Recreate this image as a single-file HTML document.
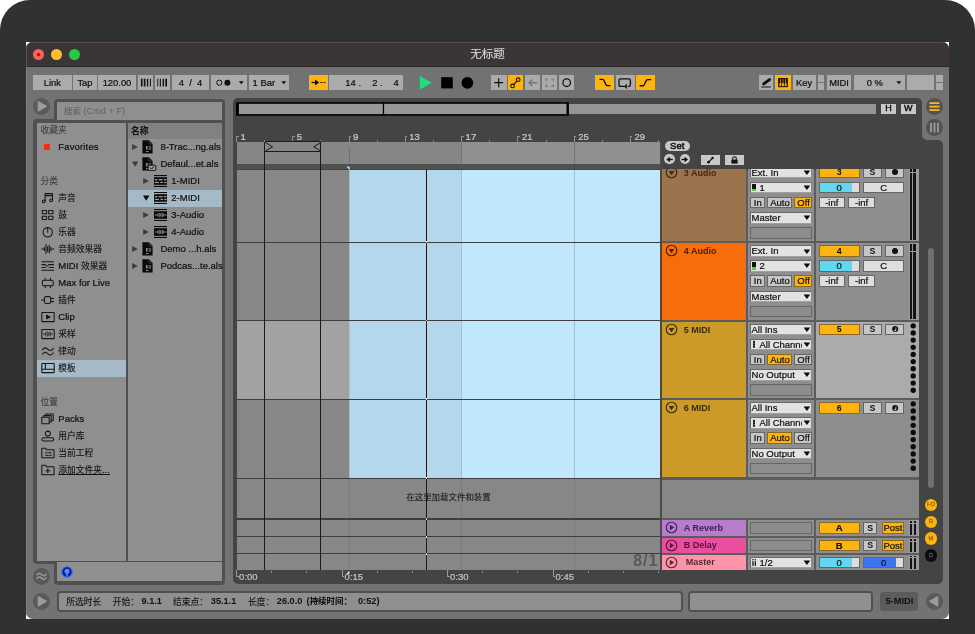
<!DOCTYPE html><html lang="zh"><head><meta charset="utf-8"><title>无标题</title><style>

html,body{margin:0;padding:0;}
body{width:975px;height:634px;overflow:hidden;background:#fff;position:relative;font-family:"Liberation Sans","Noto Sans CJK SC",sans-serif;font-size:9.5px;color:#111;}
div,svg{position:absolute;box-sizing:border-box;}
.k{font-size:0.92em;-webkit-text-stroke:0.1px currentColor;}
.t{white-space:nowrap;line-height:1;}
.c{text-align:center;}
.b{font-weight:bold;}
.btn{background:#ababab;}
.lbl{-webkit-text-stroke:0.22px currentColor;white-space:pre;display:flex;align-items:center;justify-content:center;line-height:1;}
.ll{white-space:nowrap;display:flex;align-items:center;justify-content:flex-start;line-height:1;}

</style></head><body>
<div style="left:0.00px;top:0.00px;width:975.00px;height:634.00px;background:#303133;border-radius:30px 30px 0 0;"></div>
<div style="left:26.00px;top:42.00px;width:923.00px;height:577.00px;background:#ffffff;"></div>
<div style="left:26px;top:42px;width:923px;height:577px;border-radius:6.5px 6.5px 7px 7px;overflow:hidden;background:#737373;will-change:transform;">
<div style="left:0.00px;top:0.00px;width:923.00px;height:26.00px;background:#3a3637;border-top:1px solid #555152;border-bottom:1px solid #393637;"></div>
<div style="left:0.00px;top:24.00px;width:923.00px;height:1.00px;background:#2a2728;"></div>
<div class="lbl" style="left:0.00px;top:5.60px;height:14px;font-size:12.6px;color:#dad8d8;width:923.00px;justify-content:center;-webkit-text-stroke:0;"><span><span class="k">无标题</span></span></div>
<div style="left:6.70px;top:6.70px;width:11.60px;height:11.60px;background:#fe5f57;border-radius:50%;"></div>
<div style="left:24.60px;top:6.70px;width:11.60px;height:11.60px;background:#febc2e;border-radius:50%;"></div>
<div style="left:42.60px;top:6.70px;width:11.60px;height:11.60px;background:#28c840;border-radius:50%;"></div>
<div style="left:10.90px;top:10.90px;width:3.20px;height:3.20px;background:#8a0a05;border-radius:50%;"></div>
<div style="left:0.00px;top:25.40px;width:923.00px;height:31.10px;background:#727272;"></div>
<div class="lbl" style="left:7.00px;top:33.00px;width:38.70px;height:15.20px;background:#ababab;font-size:9.4px;"><span>Link</span></div>
<div class="lbl" style="left:47.20px;top:33.00px;width:23.60px;height:15.20px;background:#ababab;font-size:9.4px;"><span>Tap</span></div>
<div class="lbl" style="left:72.30px;top:33.00px;width:37.40px;height:15.20px;background:#ababab;font-size:9.4px;"><span>120.00</span></div>
<div class="lbl" style="left:111.80px;top:33.00px;width:15.20px;height:15.20px;background:#ababab;font-size:9.4px;"><span></span></div>
<div class="lbl" style="left:129.00px;top:33.00px;width:14.80px;height:15.20px;background:#ababab;font-size:9.4px;"><span></span></div>
<div class="lbl" style="left:145.80px;top:33.00px;width:37.40px;height:15.20px;background:#ababab;font-size:9.4px;"><span>4&nbsp; /&nbsp; 4</span></div>
<div class="lbl" style="left:185.00px;top:33.00px;width:35.60px;height:15.20px;background:#ababab;font-size:9.4px;"><span></span></div>
<div class="lbl" style="left:223.00px;top:33.00px;width:40.00px;height:15.20px;background:#ababab;font-size:9.4px;"><span></span></div>
<div class="lbl" style="left:282.70px;top:33.00px;width:19.00px;height:15.20px;background:#feb40f;font-size:9.4px;"><span></span></div>
<div class="lbl" style="left:303.20px;top:33.00px;width:73.60px;height:15.20px;background:#ababab;font-size:9.4px;"><span></span></div>
<div class="lbl" style="left:304.00px;top:33.60px;height:14px;font-size:9.4px;color:#111;width:31.00px;justify-content:flex-end;"><span>14 .</span></div>
<div class="lbl" style="left:334.00px;top:33.60px;height:14px;font-size:9.4px;color:#111;width:22.70px;justify-content:flex-end;"><span>2 .</span></div>
<div class="lbl" style="left:354.00px;top:33.60px;height:14px;font-size:9.4px;color:#111;width:18.80px;justify-content:flex-end;"><span>4</span></div>
<div class="lbl" style="left:465.00px;top:33.00px;width:15.50px;height:15.20px;background:#ababab;font-size:9.4px;"><span></span></div>
<div class="lbl" style="left:482.00px;top:33.00px;width:15.40px;height:15.20px;background:#feb40f;font-size:9.4px;"><span></span></div>
<div class="lbl" style="left:499.20px;top:33.00px;width:15.10px;height:15.20px;background:#ababab;font-size:9.4px;"><span></span></div>
<div class="lbl" style="left:515.80px;top:33.00px;width:15.40px;height:15.20px;background:#ababab;font-size:9.4px;"><span></span></div>
<div class="lbl" style="left:532.80px;top:33.00px;width:15.40px;height:15.20px;background:#ababab;font-size:9.4px;"><span></span></div>
<div class="lbl" style="left:568.80px;top:33.00px;width:19.70px;height:15.20px;background:#feb40f;font-size:9.4px;"><span></span></div>
<div class="lbl" style="left:590.00px;top:33.00px;width:18.50px;height:15.20px;background:#ababab;font-size:9.4px;"><span></span></div>
<div class="lbl" style="left:610.00px;top:33.00px;width:19.00px;height:15.20px;background:#feb40f;font-size:9.4px;"><span></span></div>
<div class="lbl" style="left:733.00px;top:33.00px;width:14.30px;height:15.20px;background:#ababab;font-size:9.4px;"><span></span></div>
<div class="lbl" style="left:749.00px;top:33.00px;width:16.00px;height:15.20px;background:#feb40f;font-size:9.4px;"><span></span></div>
<div class="lbl" style="left:766.70px;top:33.00px;width:23.00px;height:15.20px;background:#ababab;font-size:9.4px;"><span>Key</span></div>
<div class="lbl" style="left:791.70px;top:33.00px;width:6.60px;height:7.30px;background:#ababab;font-size:9.4px;"><span></span></div>
<div class="lbl" style="left:791.70px;top:41.30px;width:6.60px;height:6.90px;background:#ababab;font-size:9.4px;"><span></span></div>
<div class="lbl" style="left:800.70px;top:33.00px;width:24.80px;height:15.20px;background:#ababab;font-size:9.4px;"><span>MIDI</span></div>
<div class="lbl" style="left:827.50px;top:33.00px;width:51.50px;height:15.20px;background:#ababab;font-size:9.4px;padding-right:9px;"><span>0 %</span></div>
<div class="lbl" style="left:881.00px;top:33.00px;width:27.20px;height:15.20px;background:#ababab;font-size:9.4px;"><span></span></div>
<div class="lbl" style="left:909.80px;top:33.00px;width:7.40px;height:7.30px;background:#ababab;font-size:9.4px;"><span></span></div>
<div class="lbl" style="left:909.80px;top:41.30px;width:7.40px;height:6.90px;background:#ababab;font-size:9.4px;"><span></span></div>
<svg style="left:111.80px;top:33.00px;width:15.20px;height:15.20px;" viewBox="0 0 15.20 15.20"><g fill="#111"><rect x="2.9" y="3.7" width="1.6" height="7.8"/><rect x="5.8" y="3.7" width="1.6" height="7.8"/><rect x="8.9" y="3.7" width="1.3" height="7.8"/><rect x="11.9" y="3.7" width="1" height="7.8"/></g></svg>
<svg style="left:129.00px;top:33.00px;width:14.80px;height:15.20px;" viewBox="0 0 14.80 15.20"><g fill="#111"><rect x="2.3" y="3.7" width="0.9" height="7.8"/><rect x="4.8" y="3.7" width="1.1" height="7.8"/><rect x="7.6" y="3.7" width="1.4" height="7.8"/><rect x="10.3" y="3.7" width="1.7" height="7.8"/></g></svg>
<svg style="left:185.00px;top:33.00px;width:35.60px;height:15.20px;" viewBox="0 0 35.60 15.20"><circle cx="8.3" cy="7.7" r="2.6" fill="none" stroke="#111" stroke-width="1"/><circle cx="16.4" cy="7.7" r="3" fill="#111"/><path d="M27.8 6.3h5l-2.5 3z" fill="#111"/></svg>
<div class="lbl" style="left:226.60px;top:33.60px;height:14px;font-size:9.4px;color:#111;justify-content:flex-start;"><span>1 Bar</span></div>
<svg style="left:223.00px;top:33.00px;width:40.00px;height:15.20px;" viewBox="0 0 40.00 15.20"><path d="M32.3 6.3h5l-2.5 3z" fill="#111"/></svg>
<svg style="left:282.70px;top:33.00px;width:19.00px;height:15.20px;" viewBox="0 0 19.00 15.20"><g stroke="#111" stroke-width="1.300" fill="none"><path d="M2.600 7.500h4"/><path d="M11.400 7.500h1.900M14.500 7.500h1.800" stroke-width="1.200"/></g><path d="M6 4.600L10.300 7.500 6 10.400z" fill="#111"/></svg>
<svg style="left:391.00px;top:31.00px;width:63.00px;height:20.00px;" viewBox="0 0 63.00 20.00"><path d="M2.8 2.9L15 9.7 2.8 16.5z" fill="#22dc80"/><rect x="24.2" y="4.2" width="11.6" height="11.2" fill="#000"/><circle cx="50.4" cy="9.8" r="5.9" fill="#000"/></svg>
<svg style="left:465.00px;top:33.00px;width:15.50px;height:15.20px;" viewBox="0 0 15.50 15.20"><path d="M7.7 3.2v9M3.2 7.7h9" stroke="#111" stroke-width="1.2" fill="none"/></svg>
<svg style="left:482.00px;top:33.00px;width:15.40px;height:15.20px;" viewBox="0 0 15.40 15.20"><g stroke="#111" stroke-width="1.100" fill="none"><circle cx="4.500" cy="10.900" r="1.800"/><circle cx="10.200" cy="4.700" r="1.800"/><path d="M5.700 9.600L9 6"/></g></svg>
<svg style="left:499.20px;top:33.00px;width:15.10px;height:15.20px;" viewBox="0 0 15.10 15.20"><g stroke="#6e6e6e" stroke-width="1.3" fill="none"><path d="M4 7.7h8"/><path d="M7.2 4.6L4 7.7l3.2 3.1"/></g></svg>
<svg style="left:515.80px;top:33.00px;width:15.40px;height:15.20px;" viewBox="0 0 15.40 15.20"><g stroke="#7a7a7a" stroke-width="1.2" fill="none"><path d="M4 6.2V4h2.2M9.2 4h2.2v2.2M11.4 9.2v2.2H9.2M6.2 11.4H4V9.2"/></g></svg>
<svg style="left:532.80px;top:33.00px;width:15.40px;height:15.20px;" viewBox="0 0 15.40 15.20"><circle cx="7.700" cy="7.700" r="3.800" fill="none" stroke="#111" stroke-width="1.300"/></svg>
<svg style="left:568.80px;top:33.00px;width:19.70px;height:15.20px;" viewBox="0 0 19.70 15.20"><path d="M4.5 4.4h3.2c2.2 0 2.2 6.2 4.6 6.2h3.2" stroke="#111" stroke-width="1.4" fill="none"/></svg>
<svg style="left:590.00px;top:33.00px;width:18.50px;height:15.20px;" viewBox="0 0 18.50 15.20"><g stroke="#111" stroke-width="1.300" fill="none"><path d="M8.400 11.400H4.600q-1.600 0-1.600-1.600V5.400q0-1.600 1.600-1.600h8.200q1.600 0 1.600 1.600v4.400q0 1.600-1.600 1.600h-1"/><path d="M10.800 9.200L8.400 11.400l2.400 2.200" fill="#111" stroke-width="0.800"/></g></svg>
<svg style="left:610.00px;top:33.00px;width:19.00px;height:15.20px;" viewBox="0 0 19.00 15.20"><path d="M3.6 10.8h3.4c2.2 0 2.2-6.2 4.6-6.2h3.6" stroke="#111" stroke-width="1.4" fill="none"/></svg>
<svg style="left:733.00px;top:33.00px;width:14.30px;height:15.20px;" viewBox="0 0 14.30 15.20"><path d="M4.700 8.900L10.600 4.600" stroke="#0a0a0a" stroke-width="2.900" stroke-linecap="round"/><path d="M2.200 12h9.600" stroke="#222" stroke-width="1.100"/></svg>
<svg style="left:749.00px;top:33.00px;width:16.00px;height:15.20px;" viewBox="0 0 16.00 15.20"><rect x="3.100" y="3" width="9.800" height="9.200" fill="#1a1206"/><g fill="#e8a818"><rect x="4.300" y="8.200" width="2" height="3"/><rect x="7" y="8.200" width="2" height="3"/><rect x="9.700" y="8.200" width="2" height="3"/><rect x="4.950" y="4" width="0.700" height="4.400"/><rect x="7.650" y="4" width="0.700" height="4.400"/><rect x="10.350" y="4" width="0.700" height="4.400"/></g></svg>
<svg style="left:827.50px;top:33.00px;width:51.50px;height:15.20px;" viewBox="0 0 51.50 15.20"><path d="M42.4 6.3h5l-2.5 3z" fill="#111"/></svg>
<div style="left:27.50px;top:56.60px;width:171.30px;height:25.40px;background:#505050;border-radius:4px 4px 0 0;"></div>
<div style="left:7.40px;top:77.40px;width:191.40px;height:444.60px;background:#505050;border-radius:4px 0 0 4px;"></div>
<div style="left:27.50px;top:514.00px;width:171.30px;height:28.60px;background:#505050;border-radius:0 0 4px 4px;"></div>
<div style="left:7.00px;top:56.00px;width:17.00px;height:17.00px;background:#5a5a5a;border-radius:50%;"></div>
<svg style="left:7.00px;top:56.00px;width:17.00px;height:17.00px;" viewBox="0 0 17.00 17.00"><path d="M5.2 3.4L13.6 8.3 5.2 13.2z" fill="#9c9c9c" stroke="#9c9c9c" stroke-width="1" stroke-linejoin="round"/></svg>
<div style="left:7.00px;top:525.60px;width:17.20px;height:17.20px;background:#5a5a5a;border-radius:50%;"></div>
<svg style="left:7.00px;top:526.00px;width:17.00px;height:17.00px;" viewBox="0 0 17.00 17.00"><g stroke="#a2a2a2" stroke-width="1.3" fill="none"><path d="M3.6 7.2c2-2.6 3.4-2.2 5 -0.6s3 1.8 4.8-0.8"/><path d="M3.6 10.8c2-2.6 3.4-2.2 5 -0.6s3 1.8 4.8-0.8"/></g></svg>
<div style="left:7.00px;top:550.60px;width:17.20px;height:17.20px;background:#5a5a5a;border-radius:50%;"></div>
<svg style="left:7.00px;top:551.00px;width:17.00px;height:17.00px;" viewBox="0 0 17.00 17.00"><path d="M5.2 3.4L13.6 8.3 5.2 13.2z" fill="#9c9c9c" stroke="#9c9c9c" stroke-width="1" stroke-linejoin="round"/></svg>
<div style="left:30.80px;top:59.70px;width:165.20px;height:18.50px;background:#8f8f8f;"></div>
<div class="lbl" style="left:38.00px;top:62.60px;height:14px;font-size:9.2px;color:#626262;justify-content:flex-start;-webkit-text-stroke:0;"><span><span class="k">搜索</span> (Cmd + F)</span></div>
<div style="left:10.50px;top:80.50px;width:89.50px;height:438.00px;background:#8f8f8f;"></div>
<div style="left:101.60px;top:80.50px;width:94.40px;height:438.00px;background:#8f8f8f;"></div>
<div style="left:101.60px;top:80.50px;width:94.40px;height:16.10px;background:#818181;"></div>
<div class="lbl" style="left:105.00px;top:81.50px;height:14px;font-size:9.5px;color:#111;justify-content:flex-start;font-weight:bold;"><span><span class="k">名称</span></span></div>
<div style="left:30.80px;top:520.30px;width:165.20px;height:18.90px;background:#8f8f8f;"></div>
<svg style="left:34.80px;top:523.70px;width:12.00px;height:12.00px;" viewBox="0 0 12 12"><circle cx="6" cy="6" r="5.800" fill="#3a6fea"/><circle cx="6" cy="6" r="4.700" fill="#0b1f96"/><circle cx="6" cy="5.300" r="2.500" fill="#4d8eff"/><rect x="5.200" y="6.500" width="1.600" height="4" fill="#4d8eff"/></svg>
<div class="lbl" style="left:14.60px;top:80.80px;height:14px;font-size:9.5px;color:#3f3f3f;justify-content:flex-start;"><span><span class="k">收藏夹</span></span></div>
<div style="left:18.00px;top:102.00px;width:6.30px;height:6.20px;background:#ff2a0a;"></div>
<div class="lbl" style="left:32.30px;top:98.00px;height:14px;font-size:9.5px;color:#111;justify-content:flex-start;letter-spacing:0.15px;"><span>Favorites</span></div>
<div class="lbl" style="left:14.60px;top:132.00px;height:14px;font-size:9.5px;color:#3f3f3f;justify-content:flex-start;"><span><span class="k">分类</span></span></div>
<div style="left:10.50px;top:318.00px;width:89.50px;height:16.50px;background:#a6b9c6;"></div>
<div class="lbl" style="left:32.30px;top:149.00px;height:14px;font-size:9.5px;color:#111;justify-content:flex-start;"><span><span class="k">声音</span></span></div>
<div class="lbl" style="left:32.30px;top:166.00px;height:14px;font-size:9.5px;color:#111;justify-content:flex-start;"><span><span class="k">鼓</span></span></div>
<div class="lbl" style="left:32.30px;top:183.00px;height:14px;font-size:9.5px;color:#111;justify-content:flex-start;"><span><span class="k">乐器</span></span></div>
<div class="lbl" style="left:32.30px;top:200.00px;height:14px;font-size:9.5px;color:#111;justify-content:flex-start;"><span><span class="k">音频效果器</span></span></div>
<div class="lbl" style="left:32.30px;top:217.00px;height:14px;font-size:9.5px;color:#111;justify-content:flex-start;"><span>MIDI <span class="k">效果器</span></span></div>
<div class="lbl" style="left:32.30px;top:234.00px;height:14px;font-size:9.5px;color:#111;justify-content:flex-start;"><span>Max for Live</span></div>
<div class="lbl" style="left:32.30px;top:251.00px;height:14px;font-size:9.5px;color:#111;justify-content:flex-start;"><span><span class="k">插件</span></span></div>
<div class="lbl" style="left:32.30px;top:268.00px;height:14px;font-size:9.5px;color:#111;justify-content:flex-start;"><span>Clip</span></div>
<div class="lbl" style="left:32.30px;top:285.00px;height:14px;font-size:9.5px;color:#111;justify-content:flex-start;"><span><span class="k">采样</span></span></div>
<div class="lbl" style="left:32.30px;top:302.00px;height:14px;font-size:9.5px;color:#111;justify-content:flex-start;"><span><span class="k">律动</span></span></div>
<div class="lbl" style="left:32.30px;top:319.00px;height:14px;font-size:9.5px;color:#111;justify-content:flex-start;"><span><span class="k">模板</span></span></div>
<div class="lbl" style="left:14.60px;top:353.00px;height:14px;font-size:9.5px;color:#3f3f3f;justify-content:flex-start;"><span><span class="k">位置</span></span></div>
<div class="lbl" style="left:32.30px;top:370.00px;height:14px;font-size:9.5px;color:#111;justify-content:flex-start;"><span>Packs</span></div>
<div class="lbl" style="left:32.30px;top:387.00px;height:14px;font-size:9.5px;color:#111;justify-content:flex-start;"><span><span class="k">用户库</span></span></div>
<div class="lbl" style="left:32.30px;top:404.00px;height:14px;font-size:9.5px;color:#111;justify-content:flex-start;"><span><span class="k">当前工程</span></span></div>
<div class="lbl" style="left:32.30px;top:421.00px;height:14px;font-size:9.5px;color:#111;justify-content:flex-start;text-decoration:underline;"><span><span class="k">添加文件夹</span>...</span></div>
<div style="left:101.60px;top:148.00px;width:94.40px;height:16.50px;background:#a6b9c6;"></div>
<div class="lbl" style="left:134.40px;top:98.00px;height:14px;font-size:9.5px;color:#111;justify-content:flex-start;"><span>8-Trac...ng.als</span></div>
<svg style="left:106.00px;top:102.00px;width:6.00px;height:6.00px;" viewBox="0 0 6 6"><path d="M0.2 0L5.8 3 0.2 6z" fill="#3c3c3c"/></svg>
<svg style="left:116.30px;top:98.00px;width:15.00px;height:14.00px;" viewBox="0 0 15 14"><path d="M0.4 0.3h6.6l3.6 3.6v9.6H0.4z" fill="#0a0a0a"/><path d="M7 0.3v3.6h3.6" fill="none" stroke="#555" stroke-width="0.6"/><rect x="4" y="6" width="1.6" height="3.6" fill="#8a8a8a"/><rect x="6.6" y="6.4" width="2.6" height="1.1" fill="#8a8a8a"/><rect x="6.6" y="8.4" width="2.6" height="1.1" fill="#8a8a8a"/><rect x="4" y="11" width="2.6" height="1" fill="#8a8a8a"/></svg>
<div class="lbl" style="left:134.40px;top:115.00px;height:14px;font-size:9.5px;color:#111;justify-content:flex-start;"><span>Defaul...et.als</span></div>
<svg style="left:105.60px;top:119.00px;width:6.40px;height:6.00px;" viewBox="0 0 6.4 6"><path d="M0 0.4h6.4L3.2 5.8z" fill="#3c3c3c"/></svg>
<svg style="left:116.30px;top:115.00px;width:15.00px;height:14.00px;" viewBox="0 0 15 14"><path d="M0.4 0.3h6.6l3.6 3.6v9.6H0.4z" fill="#0a0a0a"/><path d="M7 0.3v3.6h3.6" fill="none" stroke="#555" stroke-width="0.6"/><rect x="4" y="6" width="1.6" height="3.6" fill="#8a8a8a"/><rect x="6.6" y="6.4" width="2.6" height="1.1" fill="#8a8a8a"/><rect x="6.6" y="8.4" width="2.6" height="1.1" fill="#8a8a8a"/><rect x="4" y="11" width="2.6" height="1" fill="#8a8a8a"/><rect x="6.2" y="8.2" width="7.6" height="5.4" rx="0.8" fill="#999" stroke="#111" stroke-width="0.9"/><path d="M8.2 10.6l1.4 1.5 2.4-2.8" fill="none" stroke="#111" stroke-width="0.9"/></svg>
<div class="lbl" style="left:145.30px;top:132.00px;height:14px;font-size:9.5px;color:#111;justify-content:flex-start;"><span>1-MIDI</span></div>
<svg style="left:117.40px;top:136.00px;width:6.00px;height:6.00px;" viewBox="0 0 6 6"><path d="M0.2 0L5.8 3 0.2 6z" fill="#3c3c3c"/></svg>
<svg style="left:127.90px;top:133.20px;width:13.40px;height:12.00px;" viewBox="0 0 13.4 12"><rect x="0" y="0" width="13.4" height="1.1" fill="#0a0a0a"/><rect x="0" y="2.2" width="13.4" height="7.6" fill="#0a0a0a"/><rect x="0" y="10.9" width="13.4" height="1.1" fill="#0a0a0a"/><g fill="#9a9a9a"><rect x="0.800" y="4" width="2.600" height="1.300"/><rect x="4.600" y="4" width="4" height="1.300"/><rect x="9.800" y="4" width="2.600" height="1.300"/><rect x="0.800" y="6.800" width="4.200" height="1.300"/><rect x="6.400" y="6.800" width="2.600" height="1.300"/><rect x="10.200" y="6.800" width="2.400" height="1.300"/></g></svg>
<div class="lbl" style="left:145.30px;top:149.00px;height:14px;font-size:9.5px;color:#111;justify-content:flex-start;"><span>2-MIDI</span></div>
<svg style="left:117.40px;top:153.00px;width:6.40px;height:6.00px;" viewBox="0 0 6.4 6"><path d="M0 0.4h6.4L3.2 5.8z" fill="#0a0a0a"/></svg>
<svg style="left:127.90px;top:150.20px;width:13.40px;height:12.00px;" viewBox="0 0 13.4 12"><rect x="0" y="0" width="13.4" height="1.1" fill="#0a0a0a"/><rect x="0" y="2.2" width="13.4" height="7.6" fill="#0a0a0a"/><rect x="0" y="10.9" width="13.4" height="1.1" fill="#0a0a0a"/><g fill="#9a9a9a"><rect x="0.800" y="4" width="2.600" height="1.300"/><rect x="4.600" y="4" width="4" height="1.300"/><rect x="9.800" y="4" width="2.600" height="1.300"/><rect x="0.800" y="6.800" width="4.200" height="1.300"/><rect x="6.400" y="6.800" width="2.600" height="1.300"/><rect x="10.200" y="6.800" width="2.400" height="1.300"/></g></svg>
<div class="lbl" style="left:145.30px;top:166.00px;height:14px;font-size:9.5px;color:#111;justify-content:flex-start;"><span>3-Audio</span></div>
<svg style="left:117.40px;top:170.00px;width:6.00px;height:6.00px;" viewBox="0 0 6 6"><path d="M0.2 0L5.8 3 0.2 6z" fill="#3c3c3c"/></svg>
<svg style="left:127.90px;top:167.20px;width:13.40px;height:12.00px;" viewBox="0 0 13.4 12"><rect x="0" y="0" width="13.4" height="1.1" fill="#0a0a0a"/><rect x="0" y="2.2" width="13.4" height="7.6" fill="#0a0a0a"/><rect x="0" y="10.9" width="13.4" height="1.1" fill="#0a0a0a"/><g stroke="#9a9a9a" stroke-width="0.9" fill="none"><path d="M1 6h2.2M10.4 6h2.2"/><path d="M3.8 4.6v2.8M5.2 3.8v4.4M6.7 4.4v3.2M8.2 3.8v4.4M9.6 4.6v2.8"/></g></svg>
<div class="lbl" style="left:145.30px;top:183.00px;height:14px;font-size:9.5px;color:#111;justify-content:flex-start;"><span>4-Audio</span></div>
<svg style="left:117.40px;top:187.00px;width:6.00px;height:6.00px;" viewBox="0 0 6 6"><path d="M0.2 0L5.8 3 0.2 6z" fill="#3c3c3c"/></svg>
<svg style="left:127.90px;top:184.20px;width:13.40px;height:12.00px;" viewBox="0 0 13.4 12"><rect x="0" y="0" width="13.4" height="1.1" fill="#0a0a0a"/><rect x="0" y="2.2" width="13.4" height="7.6" fill="#0a0a0a"/><rect x="0" y="10.9" width="13.4" height="1.1" fill="#0a0a0a"/><g stroke="#9a9a9a" stroke-width="0.9" fill="none"><path d="M1 6h2.2M10.4 6h2.2"/><path d="M3.8 4.6v2.8M5.2 3.8v4.4M6.7 4.4v3.2M8.2 3.8v4.4M9.6 4.6v2.8"/></g></svg>
<div class="lbl" style="left:134.40px;top:200.00px;height:14px;font-size:9.5px;color:#111;justify-content:flex-start;"><span>Demo ...h.als</span></div>
<svg style="left:106.00px;top:204.00px;width:6.00px;height:6.00px;" viewBox="0 0 6 6"><path d="M0.2 0L5.8 3 0.2 6z" fill="#3c3c3c"/></svg>
<svg style="left:116.30px;top:200.00px;width:15.00px;height:14.00px;" viewBox="0 0 15 14"><path d="M0.4 0.3h6.6l3.6 3.6v9.6H0.4z" fill="#0a0a0a"/><path d="M7 0.3v3.6h3.6" fill="none" stroke="#555" stroke-width="0.6"/><rect x="4" y="6" width="1.6" height="3.6" fill="#8a8a8a"/><rect x="6.6" y="6.4" width="2.6" height="1.1" fill="#8a8a8a"/><rect x="6.6" y="8.4" width="2.6" height="1.1" fill="#8a8a8a"/><rect x="4" y="11" width="2.6" height="1" fill="#8a8a8a"/></svg>
<div class="lbl" style="left:134.40px;top:217.00px;height:14px;font-size:9.5px;color:#111;justify-content:flex-start;"><span>Podcas...te.als</span></div>
<svg style="left:106.00px;top:221.00px;width:6.00px;height:6.00px;" viewBox="0 0 6 6"><path d="M0.2 0L5.8 3 0.2 6z" fill="#3c3c3c"/></svg>
<svg style="left:116.30px;top:217.00px;width:15.00px;height:14.00px;" viewBox="0 0 15 14"><path d="M0.4 0.3h6.6l3.6 3.6v9.6H0.4z" fill="#0a0a0a"/><path d="M7 0.3v3.6h3.6" fill="none" stroke="#555" stroke-width="0.6"/><rect x="4" y="6" width="1.6" height="3.6" fill="#8a8a8a"/><rect x="6.6" y="6.4" width="2.6" height="1.1" fill="#8a8a8a"/><rect x="6.6" y="8.4" width="2.6" height="1.1" fill="#8a8a8a"/><rect x="4" y="11" width="2.6" height="1" fill="#8a8a8a"/></svg>
<svg style="left:15.00px;top:150.00px;width:14.00px;height:12.00px;" viewBox="0 0 14 12"><g fill="none" stroke="#161616" stroke-width="1.05" stroke-linejoin="round" stroke-linecap="round"><path d="M4.1 9.2V1.6h7.4v6.6M4.1 3.6h7.4"/><circle cx="2.7" cy="9.3" r="1.4"/><circle cx="10.1" cy="8.3" r="1.4"/></g></svg>
<svg style="left:15.00px;top:167.00px;width:14.00px;height:12.00px;" viewBox="0 0 14 12"><g fill="none" stroke="#161616" stroke-width="1.05" stroke-linejoin="round" stroke-linecap="round"><rect x="1.2" y="1.5" width="4.4" height="3.2" rx="0.4"/><rect x="7.6" y="1.5" width="4.4" height="3.2" rx="0.4"/><rect x="1.2" y="7.3" width="4.4" height="3.2" rx="0.4"/><rect x="7.6" y="7.3" width="4.4" height="3.2" rx="0.4"/></g></svg>
<svg style="left:15.00px;top:184.00px;width:14.00px;height:12.00px;" viewBox="0 0 14 12"><g fill="none" stroke="#161616" stroke-width="1.05" stroke-linejoin="round" stroke-linecap="round"><circle cx="6.7" cy="6.3" r="4.7"/><path d="M6.7 1.8v4.4"/></g></svg>
<svg style="left:15.00px;top:201.00px;width:14.00px;height:12.00px;" viewBox="0 0 14 12"><g fill="none" stroke="#161616" stroke-width="1.05" stroke-linejoin="round" stroke-linecap="round"><path d="M0.8 6h1.6M11 6h1.8M3.4 4.4v3.2M5 1.6v8.8M6.7 3.4v5.2M8.3 2.2v7.6M9.9 4.2v3.6"/></g></svg>
<svg style="left:15.00px;top:218.00px;width:14.00px;height:12.00px;" viewBox="0 0 14 12"><g fill="none" stroke="#161616" stroke-width="1.05" stroke-linejoin="round" stroke-linecap="round"><path d="M1 1.8h11.6M1 10.2h11.6M1 4.6h3.4l1.4 1.4h1.4M1 7.4h3.4M7.6 4.6h5M8.4 7.4h4.2"/></g></svg>
<svg style="left:15.00px;top:235.00px;width:14.00px;height:12.00px;" viewBox="0 0 14 12"><g fill="none" stroke="#161616" stroke-width="1.05" stroke-linejoin="round" stroke-linecap="round"><rect x="1.4" y="3.2" width="10.8" height="5.6" rx="1.4"/><path d="M4.2 1.2v2M9.4 1.2v2M4.2 8.8v2M9.4 8.8v2"/></g></svg>
<svg style="left:15.00px;top:252.00px;width:14.00px;height:12.00px;" viewBox="0 0 14 12"><g fill="none" stroke="#161616" stroke-width="1.05" stroke-linejoin="round" stroke-linecap="round"><path d="M0.6 6h2.8"/><rect x="3.4" y="2.6" width="6.4" height="6.8" rx="1.6"/><path d="M9.8 4.4h2.8M9.8 7.6h2.8"/></g></svg>
<svg style="left:15.00px;top:269.00px;width:14.00px;height:12.00px;" viewBox="0 0 14 12"><g fill="none" stroke="#161616" stroke-width="1.05" stroke-linejoin="round" stroke-linecap="round"><rect x="0.8" y="1.4" width="12.4" height="9.2" rx="0.4"/><path d="M5.6 4.2L9 6 5.6 7.8z" fill="#161616"/></g></svg>
<svg style="left:15.00px;top:286.00px;width:14.00px;height:12.00px;" viewBox="0 0 14 12"><g fill="none" stroke="#161616" stroke-width="1.05" stroke-linejoin="round" stroke-linecap="round"><rect x="0.8" y="1.4" width="12.4" height="9.2" rx="0.4"/><path d="M2.4 6h1.4M10.2 6h1.4M4.6 4.8v2.4M6.2 3.8v4.4M7.8 4.6v2.8M9.2 4.2v3.6" stroke-width="0.8"/></g></svg>
<svg style="left:15.00px;top:303.00px;width:14.00px;height:12.00px;" viewBox="0 0 14 12"><g fill="none" stroke="#161616" stroke-width="1.05" stroke-linejoin="round" stroke-linecap="round"><path d="M1.4 4.8c2.4-3 4-2 5.6-0.4s3.200 1.8 5.400-1"/><path d="M1.400 9.200c2.400-3 4-2 5.600-0.400s3.200 1.800 5.400-1"/></g></svg>
<svg style="left:15.00px;top:320.00px;width:14.00px;height:12.00px;" viewBox="0 0 14 12"><g fill="none" stroke="#161616" stroke-width="1.05" stroke-linejoin="round" stroke-linecap="round"><rect x="0.800" y="1.400" width="12.400" height="9.200" rx="0.400"/><path d="M0.800 7.200h12.400M4.400 1.400v5.800"/></g></svg>
<svg style="left:15.00px;top:371.00px;width:14.00px;height:12.00px;" viewBox="0 0 14 12"><g fill="none" stroke="#161616" stroke-width="1.05" stroke-linejoin="round" stroke-linecap="round"><rect x="0.8" y="4.200" width="7.400" height="6.600" rx="0.300"/><path d="M2.800 4V2.600h7.400v6.400h-1.800M4.800 2.400V1h7.400v6.400h-1.800"/></g></svg>
<svg style="left:15.00px;top:388.00px;width:14.00px;height:12.00px;" viewBox="0 0 14 12"><g fill="none" stroke="#161616" stroke-width="1.05" stroke-linejoin="round" stroke-linecap="round"><circle cx="6.800" cy="3.600" r="2.500"/><rect x="0.900" y="7.800" width="11.800" height="3.200" rx="1.500"/></g></svg>
<svg style="left:15.00px;top:405.00px;width:14.00px;height:12.00px;" viewBox="0 0 14 12"><g fill="none" stroke="#161616" stroke-width="1.05" stroke-linejoin="round" stroke-linecap="round"><path d="M0.800 10.800V1.300h3.800l1.200 1.500h7.200v8z"/><path d="M4.600 5.800h1.600M7.600 5.800h2.600M4.600 8.200h2.600M8.600 8.200h1.600" stroke-width="1.100"/></g></svg>
<svg style="left:15.00px;top:422.00px;width:14.00px;height:12.00px;" viewBox="0 0 14 12"><g fill="none" stroke="#161616" stroke-width="1.05" stroke-linejoin="round" stroke-linecap="round"><path d="M0.800 10.800V1.300h3.800l1.200 1.500h7.200v8z"/><path d="M6.800 4.800v4M4.800 6.800h4" stroke-width="1.100"/></g></svg>
<div style="left:207.00px;top:56.30px;width:689.00px;height:46.70px;background:#444444;border-radius:5px 5px 0 0;"></div>
<div style="left:207.00px;top:98.00px;width:710.00px;height:444.40px;background:#444444;border-radius:0 5px 5px 5px;"></div>
<svg style="left:896.00px;top:93.00px;width:5.00px;height:5.00px;" viewBox="0 0 5.00 5.00"><path d="M0 0A5 5 0 0 0 5 5H0z" fill="#444444"/></svg>
<svg style="left:210.00px;top:60.00px;width:333.00px;height:14.00px;" viewBox="0 0 333.00 14.00"><rect x="0" y="0.200" width="332.800" height="13.500" fill="#000"/><rect x="2.900" y="1.800" width="143.900" height="10.300" fill="#989898"/><rect x="148.100" y="1.800" width="182.400" height="10.300" fill="#989898"/></svg>
<div style="left:542.80px;top:62.00px;width:307.70px;height:9.90px;background:#959595;"></div>
<div class="lbl" style="left:855.20px;top:61.80px;width:14.80px;height:9.80px;background:#c8c8c8;font-size:9px;-webkit-text-stroke:0.45px;"><span>H</span></div>
<div class="lbl" style="left:874.70px;top:61.80px;width:15.30px;height:9.80px;background:#c8c8c8;font-size:9px;-webkit-text-stroke:0.45px;"><span>W</span></div>
<div style="left:900.10px;top:56.20px;width:16.80px;height:16.80px;background:#525252;border-radius:50%;"></div>
<svg style="left:900.00px;top:56.00px;width:17.00px;height:17.00px;" viewBox="0 0 17.00 17.00"><g stroke="#fdb623" stroke-width="1.700" stroke-linecap="round"><path d="M4.100 5.100h8.800M4.100 8.600h8.800M4.100 12.100h8.800"/></g></svg>
<div style="left:900.10px;top:76.80px;width:16.80px;height:16.80px;background:#525252;border-radius:50%;"></div>
<svg style="left:900.00px;top:76.70px;width:17.00px;height:17.00px;" viewBox="0 0 17.00 17.00"><g stroke="#a0a0a0" stroke-width="1.700" stroke-linecap="round"><path d="M5 4.300v8.400M8.500 4.300v8.400M12 4.300v8.400"/></g></svg>
<div style="left:210.00px;top:93.60px;width:1.00px;height:6.20px;background:#909090;"></div>
<div style="left:210.00px;top:93.60px;width:2.50px;height:1.00px;background:#909090;"></div>
<div class="lbl" style="left:214.50px;top:87.60px;height:14px;font-size:9.5px;color:#c9c9c9;justify-content:flex-start;"><span>1</span></div>
<div style="left:266.28px;top:93.60px;width:1.00px;height:6.20px;background:#909090;"></div>
<div style="left:266.28px;top:93.60px;width:2.50px;height:1.00px;background:#909090;"></div>
<div class="lbl" style="left:270.78px;top:87.60px;height:14px;font-size:9.5px;color:#c9c9c9;justify-content:flex-start;"><span>5</span></div>
<div style="left:322.56px;top:93.60px;width:1.00px;height:6.20px;background:#909090;"></div>
<div style="left:322.56px;top:93.60px;width:2.50px;height:1.00px;background:#909090;"></div>
<div class="lbl" style="left:327.06px;top:87.60px;height:14px;font-size:9.5px;color:#c9c9c9;justify-content:flex-start;"><span>9</span></div>
<div style="left:378.84px;top:93.60px;width:1.00px;height:6.20px;background:#909090;"></div>
<div style="left:378.84px;top:93.60px;width:2.50px;height:1.00px;background:#909090;"></div>
<div class="lbl" style="left:383.34px;top:87.60px;height:14px;font-size:9.5px;color:#c9c9c9;justify-content:flex-start;"><span>13</span></div>
<div style="left:435.12px;top:93.60px;width:1.00px;height:6.20px;background:#909090;"></div>
<div style="left:435.12px;top:93.60px;width:2.50px;height:1.00px;background:#909090;"></div>
<div class="lbl" style="left:439.62px;top:87.60px;height:14px;font-size:9.5px;color:#c9c9c9;justify-content:flex-start;"><span>17</span></div>
<div style="left:491.40px;top:93.60px;width:1.00px;height:6.20px;background:#909090;"></div>
<div style="left:491.40px;top:93.60px;width:2.50px;height:1.00px;background:#909090;"></div>
<div class="lbl" style="left:495.90px;top:87.60px;height:14px;font-size:9.5px;color:#c9c9c9;justify-content:flex-start;"><span>21</span></div>
<div style="left:547.68px;top:93.60px;width:1.00px;height:6.20px;background:#909090;"></div>
<div style="left:547.68px;top:93.60px;width:2.50px;height:1.00px;background:#909090;"></div>
<div class="lbl" style="left:552.18px;top:87.60px;height:14px;font-size:9.5px;color:#c9c9c9;justify-content:flex-start;"><span>25</span></div>
<div style="left:603.96px;top:93.60px;width:1.00px;height:6.20px;background:#909090;"></div>
<div style="left:603.96px;top:93.60px;width:2.50px;height:1.00px;background:#909090;"></div>
<div class="lbl" style="left:608.46px;top:87.60px;height:14px;font-size:9.5px;color:#c9c9c9;justify-content:flex-start;"><span>29</span></div>
<div style="left:238.14px;top:97.80px;width:1.00px;height:2.00px;background:#8a8a8a;"></div>
<div style="left:294.42px;top:97.80px;width:1.00px;height:2.00px;background:#8a8a8a;"></div>
<div style="left:350.70px;top:97.80px;width:1.00px;height:2.00px;background:#8a8a8a;"></div>
<div style="left:406.98px;top:97.80px;width:1.00px;height:2.00px;background:#8a8a8a;"></div>
<div style="left:463.26px;top:97.80px;width:1.00px;height:2.00px;background:#8a8a8a;"></div>
<div style="left:519.54px;top:97.80px;width:1.00px;height:2.00px;background:#8a8a8a;"></div>
<div style="left:575.82px;top:97.80px;width:1.00px;height:2.00px;background:#8a8a8a;"></div>
<div style="left:632.10px;top:97.80px;width:1.00px;height:2.00px;background:#8a8a8a;"></div>
<div style="left:210.50px;top:99.80px;width:225.12px;height:22.00px;background:#868686;"></div>
<div style="left:435.62px;top:99.80px;width:198.88px;height:22.00px;background:#909090;"></div>
<div style="left:210.50px;top:121.80px;width:424.00px;height:5.70px;background:#505050;"></div>
<div style="left:210.50px;top:127.50px;width:424.00px;height:400.20px;background:#3e3e3e;"></div>
<div style="left:210.50px;top:127.50px;width:424.00px;height:72.40px;background:#878787;"></div>
<div style="left:323.06px;top:127.50px;width:112.56px;height:72.40px;background:#b4d8eb;"></div>
<div style="left:435.62px;top:127.50px;width:198.88px;height:72.40px;background:#c0e7fc;"></div>
<div style="left:210.50px;top:200.60px;width:424.00px;height:77.80px;background:#878787;"></div>
<div style="left:323.06px;top:200.60px;width:112.56px;height:77.80px;background:#b4d8eb;"></div>
<div style="left:435.62px;top:200.60px;width:198.88px;height:77.80px;background:#c0e7fc;"></div>
<div style="left:210.50px;top:279.10px;width:424.00px;height:77.80px;background:#a2a2a2;"></div>
<div style="left:323.06px;top:279.10px;width:112.56px;height:77.80px;background:#b4d8eb;"></div>
<div style="left:435.62px;top:279.10px;width:198.88px;height:77.80px;background:#c0e7fc;"></div>
<div style="left:210.50px;top:357.60px;width:424.00px;height:78.00px;background:#878787;"></div>
<div style="left:323.06px;top:357.60px;width:112.56px;height:78.00px;background:#b4d8eb;"></div>
<div style="left:435.62px;top:357.60px;width:198.88px;height:78.00px;background:#c0e7fc;"></div>
<div style="left:210.50px;top:437.30px;width:424.00px;height:38.70px;background:#878787;"></div>
<div style="left:210.50px;top:477.60px;width:424.00px;height:16.40px;background:#878787;"></div>
<div style="left:210.50px;top:495.40px;width:424.00px;height:15.60px;background:#878787;"></div>
<div style="left:210.50px;top:512.40px;width:424.00px;height:15.30px;background:#878787;"></div>
<div style="left:322.56px;top:99.80px;width:1.00px;height:22.00px;background:linear-gradient(180deg,#9a9a9a,#6e6e6e 40%);"></div>
<div style="left:322.56px;top:127.50px;width:1.00px;height:72.40px;background:#a3c3d4;"></div>
<div style="left:322.56px;top:200.60px;width:1.00px;height:77.80px;background:#a3c3d4;"></div>
<div style="left:322.56px;top:279.10px;width:1.00px;height:77.80px;background:#a3c3d4;"></div>
<div style="left:322.56px;top:357.60px;width:1.00px;height:78.00px;background:#a3c3d4;"></div>
<div style="left:322.56px;top:437.30px;width:1.00px;height:38.70px;background:#7c7c7c;"></div>
<div style="left:322.56px;top:477.60px;width:1.00px;height:16.40px;background:#7c7c7c;"></div>
<div style="left:322.56px;top:495.40px;width:1.00px;height:15.60px;background:#7c7c7c;"></div>
<div style="left:322.56px;top:512.40px;width:1.00px;height:15.30px;background:#7c7c7c;"></div>
<div style="left:435.12px;top:99.80px;width:1.00px;height:22.00px;background:#747474;"></div>
<div style="left:435.12px;top:127.50px;width:1.00px;height:72.40px;background:#a3c3d4;"></div>
<div style="left:435.12px;top:200.60px;width:1.00px;height:77.80px;background:#a3c3d4;"></div>
<div style="left:435.12px;top:279.10px;width:1.00px;height:77.80px;background:#a3c3d4;"></div>
<div style="left:435.12px;top:357.60px;width:1.00px;height:78.00px;background:#a3c3d4;"></div>
<div style="left:435.12px;top:437.30px;width:1.00px;height:38.70px;background:#7c7c7c;"></div>
<div style="left:435.12px;top:477.60px;width:1.00px;height:16.40px;background:#7c7c7c;"></div>
<div style="left:435.12px;top:495.40px;width:1.00px;height:15.60px;background:#7c7c7c;"></div>
<div style="left:435.12px;top:512.40px;width:1.00px;height:15.30px;background:#7c7c7c;"></div>
<div style="left:547.68px;top:99.80px;width:1.00px;height:22.00px;background:#747474;"></div>
<div style="left:547.68px;top:127.50px;width:1.00px;height:72.40px;background:#9dbfd0;"></div>
<div style="left:547.68px;top:200.60px;width:1.00px;height:77.80px;background:#9dbfd0;"></div>
<div style="left:547.68px;top:279.10px;width:1.00px;height:77.80px;background:#9dbfd0;"></div>
<div style="left:547.68px;top:357.60px;width:1.00px;height:78.00px;background:#9dbfd0;"></div>
<div style="left:547.68px;top:437.30px;width:1.00px;height:38.70px;background:#7c7c7c;"></div>
<div style="left:547.68px;top:477.60px;width:1.00px;height:16.40px;background:#7c7c7c;"></div>
<div style="left:547.68px;top:495.40px;width:1.00px;height:15.60px;background:#7c7c7c;"></div>
<div style="left:547.68px;top:512.40px;width:1.00px;height:15.30px;background:#7c7c7c;"></div>
<div style="left:238.14px;top:99.80px;width:1.00px;height:427.90px;background:#1a1a1a;"></div>
<div style="left:294.42px;top:99.80px;width:1.00px;height:427.90px;background:#1a1a1a;"></div>
<div style="left:238.64px;top:99.30px;width:56.28px;height:1.00px;background:#1a1a1a;"></div>
<div style="left:238.64px;top:108.90px;width:56.28px;height:1.00px;background:#1a1a1a;"></div>
<svg style="left:238.64px;top:99.80px;width:56.28px;height:9.60px;" viewBox="0 0 56.28 9.60"><g stroke="#1a1a1a" stroke-width="1" fill="none"><path d="M0.5 0.6l7 4.2-7 4.2"/><path d="M55.78 0.6l-7 4.2 7 4.2"/></g></svg>
<div style="left:399.80px;top:127.50px;width:1.20px;height:400.20px;background:#1a1a1a;"></div>
<div style="left:399.50px;top:199.10px;width:1.80px;height:1.80px;background:#e8e8e8;"></div>
<div style="left:399.50px;top:277.60px;width:1.80px;height:1.80px;background:#e8e8e8;"></div>
<div style="left:399.50px;top:356.10px;width:1.80px;height:1.80px;background:#e8e8e8;"></div>
<div style="left:399.50px;top:435.40px;width:1.80px;height:1.80px;background:#e8e8e8;"></div>
<div style="left:399.50px;top:475.90px;width:1.80px;height:1.80px;background:#e8e8e8;"></div>
<div style="left:399.50px;top:493.80px;width:1.80px;height:1.80px;background:#e8e8e8;"></div>
<div style="left:399.50px;top:510.80px;width:1.80px;height:1.80px;background:#e8e8e8;"></div>
<svg style="left:320.00px;top:123.50px;width:4.00px;height:4.50px;" viewBox="0 0 4.00 4.50"><path d="M0.6 0.6L3.6 0.8 3.6 4.2z" fill="#d8ecf6"/></svg>
<svg style="left:320.00px;top:528.00px;width:4.00px;height:5.00px;" viewBox="0 0 4.00 5.00"><path d="M0.400 4L3.400 0.600 3.400 4z" fill="#bfe4f6"/></svg>
<div class="lbl" style="left:210.50px;top:449.00px;height:14px;font-size:9.2px;color:#1c1c1c;width:424.00px;justify-content:center;"><span><span class="k">在这里加载文件和装置</span></span></div>
<div class="lbl" style="left:574.00px;top:511.40px;height:16px;font-size:16px;color:#585858;width:58.20px;justify-content:flex-end;font-weight:bold;-webkit-text-stroke:0;letter-spacing:0.9px;"><span>8/1</span></div>
<div style="left:210.00px;top:528.20px;width:1.00px;height:6.80px;background:#989898;"></div>
<div style="left:210.00px;top:534.00px;width:2.50px;height:1.00px;background:#989898;"></div>
<div class="lbl" style="left:213.10px;top:527.60px;height:14px;font-size:9.5px;color:#c4c4c4;justify-content:flex-start;"><span>0:00</span></div>
<div style="left:315.50px;top:528.20px;width:1.00px;height:6.80px;background:#989898;"></div>
<div style="left:315.50px;top:534.00px;width:2.50px;height:1.00px;background:#989898;"></div>
<div class="lbl" style="left:318.60px;top:527.60px;height:14px;font-size:9.5px;color:#c4c4c4;justify-content:flex-start;"><span>0:15</span></div>
<div style="left:421.00px;top:528.20px;width:1.00px;height:6.80px;background:#989898;"></div>
<div style="left:421.00px;top:534.00px;width:2.50px;height:1.00px;background:#989898;"></div>
<div class="lbl" style="left:424.10px;top:527.60px;height:14px;font-size:9.5px;color:#c4c4c4;justify-content:flex-start;"><span>0:30</span></div>
<div style="left:526.50px;top:528.20px;width:1.00px;height:6.80px;background:#989898;"></div>
<div style="left:526.50px;top:534.00px;width:2.50px;height:1.00px;background:#989898;"></div>
<div class="lbl" style="left:529.60px;top:527.60px;height:14px;font-size:9.5px;color:#c4c4c4;justify-content:flex-start;"><span>0:45</span></div>
<div style="left:245.17px;top:528.50px;width:1.00px;height:2.00px;background:#8a8a8a;"></div>
<div style="left:280.33px;top:528.50px;width:1.00px;height:2.00px;background:#8a8a8a;"></div>
<div style="left:350.67px;top:528.50px;width:1.00px;height:2.00px;background:#8a8a8a;"></div>
<div style="left:385.83px;top:528.50px;width:1.00px;height:2.00px;background:#8a8a8a;"></div>
<div style="left:456.17px;top:528.50px;width:1.00px;height:2.00px;background:#8a8a8a;"></div>
<div style="left:491.33px;top:528.50px;width:1.00px;height:2.00px;background:#8a8a8a;"></div>
<div style="left:561.67px;top:528.50px;width:1.00px;height:2.00px;background:#8a8a8a;"></div>
<div style="left:596.83px;top:528.50px;width:1.00px;height:2.00px;background:#8a8a8a;"></div>
<div style="left:632.00px;top:528.50px;width:1.00px;height:2.00px;background:#8a8a8a;"></div>
<div style="left:638.50px;top:99.00px;width:25.50px;height:10.20px;background:#c8c8c8;border-radius:5px;"></div>
<div class="lbl" style="left:638.50px;top:97.20px;height:14px;font-size:9.5px;color:#111;width:25.50px;justify-content:center;-webkit-text-stroke:0.5px;"><span>Set</span></div>
<div style="left:638.40px;top:112.10px;width:10.40px;height:10.40px;background:#c8c8c8;border-radius:50%;"></div>
<div style="left:653.50px;top:112.10px;width:10.40px;height:10.40px;background:#c8c8c8;border-radius:50%;"></div>
<svg style="left:638.00px;top:112.00px;width:11.40px;height:11.00px;" viewBox="0 0 11.40 11.00"><path d="M4.600 5.500h4.200" stroke="#0a0a0a" stroke-width="1.400"/><path d="M2.400 5.500L5.800 2.700v5.600z" fill="#0a0a0a"/></svg>
<svg style="left:653.00px;top:112.00px;width:11.40px;height:11.00px;" viewBox="0 0 11.40 11.00"><path d="M2.600 5.500h4.200" stroke="#0a0a0a" stroke-width="1.400"/><path d="M9 5.500L5.600 2.700v5.600z" fill="#0a0a0a"/></svg>
<div style="left:674.80px;top:112.60px;width:19.20px;height:10.10px;background:#c8c8c8;"></div>
<svg style="left:674.80px;top:112.60px;width:19.20px;height:10.10px;" viewBox="0 0 19.20 10.10"><path d="M7.6 7.2L11.6 3" stroke="#111" stroke-width="1.2"/><circle cx="7.6" cy="7.2" r="1.4" fill="#111"/><circle cx="11.6" cy="3" r="1.2" fill="#111"/></svg>
<div style="left:699.30px;top:112.60px;width:18.90px;height:10.10px;background:#c8c8c8;"></div>
<svg style="left:699.30px;top:112.60px;width:18.90px;height:10.10px;" viewBox="0 0 18.90 10.10"><rect x="6.4" y="4.6" width="6.2" height="4" fill="#111"/><path d="M7.7 4.8V3.6a1.8 1.8 0 0 1 3.6 0v1.2" stroke="#111" stroke-width="1.1" fill="none"/></svg>
<div style="left:636.40px;top:127.50px;width:256.40px;height:400.20px;background:#5c5c5c;"></div>
<div style="left:634.20px;top:99.80px;width:2.30px;height:427.90px;background:#494949;"></div>
<div style="left:636.40px;top:127.00px;width:256.40px;height:308.60px;overflow:hidden;">
<div style="left:0.00px;top:-4.30px;width:83.80px;height:76.60px;background:#9b734c;"></div>
<div style="left:85.30px;top:-4.30px;width:66.10px;height:76.60px;background:#8e8e8e;"></div>
<div style="left:153.40px;top:-4.30px;width:103.00px;height:76.60px;background:#8e8e8e;"></div>
<svg style="left:2.40px;top:-3.10px;width:13.00px;height:13.00px;" viewBox="0 0 13 13"><circle cx="6.500" cy="6.500" r="5.300" fill="none" stroke="#3f2a15" stroke-width="1.100"/><path d="M3.700 4.900h5.600L6.500 9.200z" fill="#3f2a15"/></svg>
<div class="lbl" style="left:21.40px;top:-2.80px;height:14px;font-size:9.0px;color:#3f2a15;justify-content:flex-start;font-weight:bold;-webkit-text-stroke:0;"><span>3 Audio</span></div>
<div class="lbl" style="left:87.15px;top:-2.05px;width:62.50px;height:11.10px;background:#e2e2e2;font-size:9.5px;border:1px solid #666666;overflow:hidden;justify-content:flex-start;padding-left:1.0px;border-color:#686868 #8a8a8a #a0a0a0 #686868;"><span>Ext. In</span></div>
<svg style="left:139.20px;top:-1.00px;width:9.40px;height:9.00px;" viewBox="0 0 9.4 9.00"><rect x="0" y="0" width="9.400" height="12" fill="#e2e2e2"/><path d="M1.600 2.400h6.600l-3.300 4.700z" fill="#0a0a0a"/></svg>
<div class="lbl" style="left:87.15px;top:12.75px;width:62.50px;height:11.50px;background:#e2e2e2;font-size:9.5px;border:1px solid #666666;overflow:hidden;justify-content:flex-start;padding-left:1.0px;border-color:#686868 #8a8a8a #a0a0a0 #686868;"><span>&nbsp;&nbsp;&nbsp;1</span></div>
<svg style="left:139.20px;top:13.80px;width:9.40px;height:9.40px;" viewBox="0 0 9.4 9.40"><rect x="0" y="0" width="9.400" height="12" fill="#e2e2e2"/><path d="M1.600 2.400h6.600l-3.300 4.700z" fill="#0a0a0a"/></svg>
<div style="left:89.20px;top:14.80px;width:4.20px;height:4.80px;background:#111;"></div>
<div style="left:89.20px;top:19.60px;width:4.20px;height:2.80px;background:#3fdc3f;"></div>
<div class="lbl" style="left:87.15px;top:43.15px;width:62.50px;height:11.40px;background:#e2e2e2;font-size:9.5px;border:1px solid #666666;overflow:hidden;justify-content:flex-start;padding-left:1.0px;border-color:#686868 #8a8a8a #a0a0a0 #686868;"><span>Master</span></div>
<svg style="left:139.20px;top:44.20px;width:9.40px;height:9.30px;" viewBox="0 0 9.4 9.30"><rect x="0" y="0" width="9.400" height="12" fill="#e2e2e2"/><path d="M1.600 2.400h6.600l-3.300 4.700z" fill="#0a0a0a"/></svg>
<div class="lbl" style="left:87.15px;top:27.85px;width:15.50px;height:11.50px;background:#c6c6c6;font-size:9.5px;border:1px solid #666666;overflow:hidden;justify-content:center;padding-left:1.0px;"><span>In</span></div>
<div class="lbl" style="left:104.75px;top:27.85px;width:24.60px;height:11.50px;background:#c6c6c6;font-size:9.5px;border:1px solid #666666;overflow:hidden;justify-content:center;padding-left:1.0px;"><span>Auto</span></div>
<div class="lbl" style="left:131.65px;top:27.85px;width:18.00px;height:11.50px;background:#feb40f;font-size:9.5px;border:1px solid #8a6a20;overflow:hidden;justify-content:center;padding-left:1.0px;"><span>Off</span></div>
<div class="lbl" style="left:87.15px;top:58.35px;width:62.50px;height:11.60px;background:#8d8d8d;font-size:9.5px;border:1px solid #666666;overflow:hidden;justify-content:center;padding-left:1.0px;"><span></span></div>
<div class="lbl" style="left:156.15px;top:-2.05px;width:41.10px;height:11.10px;background:#feb40f;font-size:9.5px;border:1px solid #8a6a20;overflow:hidden;justify-content:center;padding-left:0px;font-weight:bold;-webkit-text-stroke:0;font-size:8.8px;"><span>3</span></div>
<div class="lbl" style="left:200.75px;top:-2.05px;width:18.70px;height:11.10px;background:#c6c6c6;font-size:9.5px;border:1px solid #666666;overflow:hidden;justify-content:center;padding-left:0px;font-weight:bold;-webkit-text-stroke:0;font-size:8.8px;"><span>S</span></div>
<div class="lbl" style="left:222.75px;top:-2.05px;width:19.20px;height:11.10px;background:#c6c6c6;font-size:9.5px;border:1px solid #666666;overflow:hidden;justify-content:center;padding-left:0px;"><span></span></div>
<div style="left:229.50px;top:0.30px;width:5.80px;height:5.80px;background:#111;border-radius:50%;"></div>
<div class="lbl" style="left:156.15px;top:12.75px;width:41.10px;height:11.50px;background:#dcdcdc;font-size:9.5px;border:1px solid #666666;overflow:hidden;justify-content:center;padding-left:0px;background:linear-gradient(90deg,#5fd8f0 0,#5fd8f0 83%,#dcdcdc 83%);"><span>0</span></div>
<div class="lbl" style="left:200.75px;top:12.75px;width:41.20px;height:11.50px;background:#dedede;font-size:9.5px;border:1px solid #666666;overflow:hidden;justify-content:center;padding-left:0px;"><span>C</span></div>
<div class="lbl" style="left:156.15px;top:27.85px;width:26.50px;height:11.50px;background:#dedede;font-size:9.5px;border:1px solid #666666;overflow:hidden;justify-content:center;padding-left:0px;"><span>-inf</span></div>
<div class="lbl" style="left:185.75px;top:27.85px;width:26.90px;height:11.50px;background:#dedede;font-size:9.5px;border:1px solid #666666;overflow:hidden;justify-content:center;padding-left:0px;"><span>-inf</span></div>
<div style="left:246.30px;top:-4.30px;width:10.10px;height:76.60px;background:#999999;"></div>
<div style="left:247.50px;top:-3.70px;width:2.30px;height:75.00px;background:#141414;"></div>
<div style="left:251.10px;top:-3.70px;width:2.40px;height:75.00px;background:#141414;"></div>
<div style="left:247.10px;top:3.40px;width:6.80px;height:1.10px;background:#999999;"></div>
<div style="left:0.00px;top:74.20px;width:83.80px;height:76.60px;background:#f76d0a;"></div>
<div style="left:85.30px;top:74.20px;width:66.10px;height:76.60px;background:#8e8e8e;"></div>
<div style="left:153.40px;top:74.20px;width:103.00px;height:76.60px;background:#8e8e8e;"></div>
<svg style="left:2.40px;top:75.40px;width:13.00px;height:13.00px;" viewBox="0 0 13 13"><circle cx="6.500" cy="6.500" r="5.300" fill="none" stroke="#4d2000" stroke-width="1.100"/><path d="M3.700 4.900h5.600L6.500 9.200z" fill="#4d2000"/></svg>
<div class="lbl" style="left:21.40px;top:75.70px;height:14px;font-size:9.0px;color:#4d2000;justify-content:flex-start;font-weight:bold;-webkit-text-stroke:0;"><span>4 Audio</span></div>
<div class="lbl" style="left:87.15px;top:76.45px;width:62.50px;height:11.10px;background:#e2e2e2;font-size:9.5px;border:1px solid #666666;overflow:hidden;justify-content:flex-start;padding-left:1.0px;border-color:#686868 #8a8a8a #a0a0a0 #686868;"><span>Ext. In</span></div>
<svg style="left:139.20px;top:77.50px;width:9.40px;height:9.00px;" viewBox="0 0 9.4 9.00"><rect x="0" y="0" width="9.400" height="12" fill="#e2e2e2"/><path d="M1.600 2.400h6.600l-3.300 4.700z" fill="#0a0a0a"/></svg>
<div class="lbl" style="left:87.15px;top:91.25px;width:62.50px;height:11.50px;background:#e2e2e2;font-size:9.5px;border:1px solid #666666;overflow:hidden;justify-content:flex-start;padding-left:1.0px;border-color:#686868 #8a8a8a #a0a0a0 #686868;"><span>&nbsp;&nbsp;&nbsp;2</span></div>
<svg style="left:139.20px;top:92.30px;width:9.40px;height:9.40px;" viewBox="0 0 9.4 9.40"><rect x="0" y="0" width="9.400" height="12" fill="#e2e2e2"/><path d="M1.600 2.400h6.600l-3.300 4.700z" fill="#0a0a0a"/></svg>
<div style="left:89.20px;top:93.30px;width:4.20px;height:4.80px;background:#111;"></div>
<div style="left:89.20px;top:98.10px;width:4.20px;height:2.80px;background:#3fdc3f;"></div>
<div class="lbl" style="left:87.15px;top:121.65px;width:62.50px;height:11.40px;background:#e2e2e2;font-size:9.5px;border:1px solid #666666;overflow:hidden;justify-content:flex-start;padding-left:1.0px;border-color:#686868 #8a8a8a #a0a0a0 #686868;"><span>Master</span></div>
<svg style="left:139.20px;top:122.70px;width:9.40px;height:9.30px;" viewBox="0 0 9.4 9.30"><rect x="0" y="0" width="9.400" height="12" fill="#e2e2e2"/><path d="M1.600 2.400h6.600l-3.300 4.700z" fill="#0a0a0a"/></svg>
<div class="lbl" style="left:87.15px;top:106.35px;width:15.50px;height:11.50px;background:#c6c6c6;font-size:9.5px;border:1px solid #666666;overflow:hidden;justify-content:center;padding-left:1.0px;"><span>In</span></div>
<div class="lbl" style="left:104.75px;top:106.35px;width:24.60px;height:11.50px;background:#c6c6c6;font-size:9.5px;border:1px solid #666666;overflow:hidden;justify-content:center;padding-left:1.0px;"><span>Auto</span></div>
<div class="lbl" style="left:131.65px;top:106.35px;width:18.00px;height:11.50px;background:#feb40f;font-size:9.5px;border:1px solid #8a6a20;overflow:hidden;justify-content:center;padding-left:1.0px;"><span>Off</span></div>
<div class="lbl" style="left:87.15px;top:136.85px;width:62.50px;height:11.60px;background:#8d8d8d;font-size:9.5px;border:1px solid #666666;overflow:hidden;justify-content:center;padding-left:1.0px;"><span></span></div>
<div class="lbl" style="left:156.15px;top:76.45px;width:41.10px;height:11.10px;background:#feb40f;font-size:9.5px;border:1px solid #8a6a20;overflow:hidden;justify-content:center;padding-left:0px;font-weight:bold;-webkit-text-stroke:0;font-size:8.8px;"><span>4</span></div>
<div class="lbl" style="left:200.75px;top:76.45px;width:18.70px;height:11.10px;background:#c6c6c6;font-size:9.5px;border:1px solid #666666;overflow:hidden;justify-content:center;padding-left:0px;font-weight:bold;-webkit-text-stroke:0;font-size:8.8px;"><span>S</span></div>
<div class="lbl" style="left:222.75px;top:76.45px;width:19.20px;height:11.10px;background:#c6c6c6;font-size:9.5px;border:1px solid #666666;overflow:hidden;justify-content:center;padding-left:0px;"><span></span></div>
<div style="left:229.50px;top:78.80px;width:5.80px;height:5.80px;background:#111;border-radius:50%;"></div>
<div class="lbl" style="left:156.15px;top:91.25px;width:41.10px;height:11.50px;background:#dcdcdc;font-size:9.5px;border:1px solid #666666;overflow:hidden;justify-content:center;padding-left:0px;background:linear-gradient(90deg,#5fd8f0 0,#5fd8f0 83%,#dcdcdc 83%);"><span>0</span></div>
<div class="lbl" style="left:200.75px;top:91.25px;width:41.20px;height:11.50px;background:#dedede;font-size:9.5px;border:1px solid #666666;overflow:hidden;justify-content:center;padding-left:0px;"><span>C</span></div>
<div class="lbl" style="left:156.15px;top:106.35px;width:26.50px;height:11.50px;background:#dedede;font-size:9.5px;border:1px solid #666666;overflow:hidden;justify-content:center;padding-left:0px;"><span>-inf</span></div>
<div class="lbl" style="left:185.75px;top:106.35px;width:26.90px;height:11.50px;background:#dedede;font-size:9.5px;border:1px solid #666666;overflow:hidden;justify-content:center;padding-left:0px;"><span>-inf</span></div>
<div style="left:246.30px;top:74.20px;width:10.10px;height:76.60px;background:#999999;"></div>
<div style="left:247.50px;top:74.80px;width:2.30px;height:75.00px;background:#141414;"></div>
<div style="left:251.10px;top:74.80px;width:2.40px;height:75.00px;background:#141414;"></div>
<div style="left:247.10px;top:81.90px;width:6.80px;height:1.10px;background:#999999;"></div>
<div style="left:0.00px;top:152.70px;width:83.80px;height:76.60px;background:#cc9a28;"></div>
<div style="left:85.30px;top:152.70px;width:66.10px;height:76.60px;background:#8e8e8e;"></div>
<div style="left:153.40px;top:152.70px;width:103.00px;height:76.60px;background:#ababab;"></div>
<svg style="left:2.40px;top:153.90px;width:13.00px;height:13.00px;" viewBox="0 0 13 13"><circle cx="6.500" cy="6.500" r="5.300" fill="none" stroke="#3b2c08" stroke-width="1.100"/><path d="M3.700 4.900h5.600L6.500 9.200z" fill="#3b2c08"/></svg>
<div class="lbl" style="left:21.40px;top:154.20px;height:14px;font-size:9.0px;color:#3b2c08;justify-content:flex-start;font-weight:bold;-webkit-text-stroke:0;"><span>5 MIDI</span></div>
<div class="lbl" style="left:87.15px;top:154.95px;width:62.50px;height:11.10px;background:#e2e2e2;font-size:9.5px;border:1px solid #666666;overflow:hidden;justify-content:flex-start;padding-left:1.0px;border-color:#686868 #8a8a8a #a0a0a0 #686868;"><span>All Ins</span></div>
<svg style="left:139.20px;top:156.00px;width:9.40px;height:9.00px;" viewBox="0 0 9.4 9.00"><rect x="0" y="0" width="9.400" height="12" fill="#e2e2e2"/><path d="M1.600 2.400h6.600l-3.300 4.700z" fill="#0a0a0a"/></svg>
<div class="lbl" style="left:87.15px;top:169.75px;width:62.50px;height:11.50px;background:#e2e2e2;font-size:9.5px;border:1px solid #666666;overflow:hidden;justify-content:flex-start;padding-left:1.0px;border-color:#686868 #8a8a8a #a0a0a0 #686868;"><span>&nbsp;&nbsp;&nbsp;All Channels</span></div>
<svg style="left:139.20px;top:170.80px;width:9.40px;height:9.40px;" viewBox="0 0 9.4 9.40"><rect x="0" y="0" width="9.400" height="12" fill="#e2e2e2"/><path d="M1.600 2.400h6.600l-3.300 4.700z" fill="#0a0a0a"/></svg>
<svg style="left:87.60px;top:170.20px;width:8.00px;height:10.60px;" viewBox="0 0 8 10.2"><g fill="#111"><circle cx="4" cy="2.6" r="1.1"/><circle cx="4" cy="5.1" r="1.1"/><circle cx="4" cy="7.6" r="1.1"/><rect x="3.5" y="2" width="1" height="6"/></g></svg>
<div class="lbl" style="left:87.15px;top:200.15px;width:62.50px;height:11.40px;background:#e2e2e2;font-size:9.5px;border:1px solid #666666;overflow:hidden;justify-content:flex-start;padding-left:1.0px;border-color:#686868 #8a8a8a #a0a0a0 #686868;"><span>No Output</span></div>
<svg style="left:139.20px;top:201.20px;width:9.40px;height:9.30px;" viewBox="0 0 9.4 9.30"><rect x="0" y="0" width="9.400" height="12" fill="#e2e2e2"/><path d="M1.600 2.400h6.600l-3.300 4.700z" fill="#0a0a0a"/></svg>
<div class="lbl" style="left:87.15px;top:184.85px;width:15.50px;height:11.50px;background:#c6c6c6;font-size:9.5px;border:1px solid #666666;overflow:hidden;justify-content:center;padding-left:1.0px;"><span>In</span></div>
<div class="lbl" style="left:104.75px;top:184.85px;width:24.60px;height:11.50px;background:#feb40f;font-size:9.5px;border:1px solid #8a6a20;overflow:hidden;justify-content:center;padding-left:1.0px;"><span>Auto</span></div>
<div class="lbl" style="left:131.65px;top:184.85px;width:18.00px;height:11.50px;background:#c6c6c6;font-size:9.5px;border:1px solid #666666;overflow:hidden;justify-content:center;padding-left:1.0px;"><span>Off</span></div>
<div class="lbl" style="left:87.15px;top:215.35px;width:62.50px;height:11.60px;background:#8d8d8d;font-size:9.5px;border:1px solid #666666;overflow:hidden;justify-content:center;padding-left:1.0px;"><span></span></div>
<div class="lbl" style="left:156.15px;top:154.95px;width:41.10px;height:11.10px;background:#feb40f;font-size:9.5px;border:1px solid #8a6a20;overflow:hidden;justify-content:center;padding-left:0px;font-weight:bold;-webkit-text-stroke:0;font-size:8.8px;"><span>5</span></div>
<div class="lbl" style="left:200.75px;top:154.95px;width:18.70px;height:11.10px;background:#c6c6c6;font-size:9.5px;border:1px solid #666666;overflow:hidden;justify-content:center;padding-left:0px;font-weight:bold;-webkit-text-stroke:0;font-size:8.8px;"><span>S</span></div>
<div class="lbl" style="left:222.75px;top:154.95px;width:19.20px;height:11.10px;background:#c6c6c6;font-size:9.5px;border:1px solid #666666;overflow:hidden;justify-content:center;padding-left:0px;"><span></span></div>
<svg style="left:227.40px;top:155.20px;width:10.00px;height:10.00px;" viewBox="0 0 10 10"><circle cx="5.200" cy="5.100" r="3" fill="#0c0c0c"/><path d="M5.900 3.300v3" stroke="#c8c8c8" stroke-width="0.800"/><circle cx="5.200" cy="6.400" r="0.900" fill="#c8c8c8"/></svg>
<svg style="left:246.60px;top:152.70px;width:9.00px;height:76.60px;" viewBox="0 0 9 76.60"><circle cx="4.200" cy="3.80" r="2.650" fill="#0c0c0c"/><circle cx="4.200" cy="10.96" r="2.650" fill="#0c0c0c"/><circle cx="4.200" cy="18.12" r="2.650" fill="#0c0c0c"/><circle cx="4.200" cy="25.28" r="2.650" fill="#0c0c0c"/><circle cx="4.200" cy="32.44" r="2.650" fill="#0c0c0c"/><circle cx="4.200" cy="39.60" r="2.650" fill="#0c0c0c"/><circle cx="4.200" cy="46.76" r="2.650" fill="#0c0c0c"/><circle cx="4.200" cy="53.92" r="2.650" fill="#0c0c0c"/><circle cx="4.200" cy="61.08" r="2.650" fill="#0c0c0c"/><circle cx="4.200" cy="68.24" r="2.650" fill="#0c0c0c"/></svg>
<div style="left:0.00px;top:231.20px;width:83.80px;height:77.30px;background:#cc9a28;"></div>
<div style="left:85.30px;top:231.20px;width:66.10px;height:77.30px;background:#8e8e8e;"></div>
<div style="left:153.40px;top:231.20px;width:103.00px;height:77.30px;background:#8e8e8e;"></div>
<svg style="left:2.40px;top:232.40px;width:13.00px;height:13.00px;" viewBox="0 0 13 13"><circle cx="6.500" cy="6.500" r="5.300" fill="none" stroke="#3b2c08" stroke-width="1.100"/><path d="M3.700 4.900h5.600L6.500 9.200z" fill="#3b2c08"/></svg>
<div class="lbl" style="left:21.40px;top:232.70px;height:14px;font-size:9.0px;color:#3b2c08;justify-content:flex-start;font-weight:bold;-webkit-text-stroke:0;"><span>6 MIDI</span></div>
<div class="lbl" style="left:87.15px;top:233.45px;width:62.50px;height:11.10px;background:#e2e2e2;font-size:9.5px;border:1px solid #666666;overflow:hidden;justify-content:flex-start;padding-left:1.0px;border-color:#686868 #8a8a8a #a0a0a0 #686868;"><span>All Ins</span></div>
<svg style="left:139.20px;top:234.50px;width:9.40px;height:9.00px;" viewBox="0 0 9.4 9.00"><rect x="0" y="0" width="9.400" height="12" fill="#e2e2e2"/><path d="M1.600 2.400h6.600l-3.300 4.700z" fill="#0a0a0a"/></svg>
<div class="lbl" style="left:87.15px;top:248.25px;width:62.50px;height:11.50px;background:#e2e2e2;font-size:9.5px;border:1px solid #666666;overflow:hidden;justify-content:flex-start;padding-left:1.0px;border-color:#686868 #8a8a8a #a0a0a0 #686868;"><span>&nbsp;&nbsp;&nbsp;All Channels</span></div>
<svg style="left:139.20px;top:249.30px;width:9.40px;height:9.40px;" viewBox="0 0 9.4 9.40"><rect x="0" y="0" width="9.400" height="12" fill="#e2e2e2"/><path d="M1.600 2.400h6.600l-3.300 4.700z" fill="#0a0a0a"/></svg>
<svg style="left:87.60px;top:248.70px;width:8.00px;height:10.60px;" viewBox="0 0 8 10.2"><g fill="#111"><circle cx="4" cy="2.6" r="1.1"/><circle cx="4" cy="5.1" r="1.1"/><circle cx="4" cy="7.6" r="1.1"/><rect x="3.5" y="2" width="1" height="6"/></g></svg>
<div class="lbl" style="left:87.15px;top:278.65px;width:62.50px;height:11.40px;background:#e2e2e2;font-size:9.5px;border:1px solid #666666;overflow:hidden;justify-content:flex-start;padding-left:1.0px;border-color:#686868 #8a8a8a #a0a0a0 #686868;"><span>No Output</span></div>
<svg style="left:139.20px;top:279.70px;width:9.40px;height:9.30px;" viewBox="0 0 9.4 9.30"><rect x="0" y="0" width="9.400" height="12" fill="#e2e2e2"/><path d="M1.600 2.400h6.600l-3.300 4.700z" fill="#0a0a0a"/></svg>
<div class="lbl" style="left:87.15px;top:263.35px;width:15.50px;height:11.50px;background:#c6c6c6;font-size:9.5px;border:1px solid #666666;overflow:hidden;justify-content:center;padding-left:1.0px;"><span>In</span></div>
<div class="lbl" style="left:104.75px;top:263.35px;width:24.60px;height:11.50px;background:#feb40f;font-size:9.5px;border:1px solid #8a6a20;overflow:hidden;justify-content:center;padding-left:1.0px;"><span>Auto</span></div>
<div class="lbl" style="left:131.65px;top:263.35px;width:18.00px;height:11.50px;background:#c6c6c6;font-size:9.5px;border:1px solid #666666;overflow:hidden;justify-content:center;padding-left:1.0px;"><span>Off</span></div>
<div class="lbl" style="left:87.15px;top:293.85px;width:62.50px;height:11.60px;background:#8d8d8d;font-size:9.5px;border:1px solid #666666;overflow:hidden;justify-content:center;padding-left:1.0px;"><span></span></div>
<div class="lbl" style="left:156.15px;top:233.45px;width:41.10px;height:11.10px;background:#feb40f;font-size:9.5px;border:1px solid #8a6a20;overflow:hidden;justify-content:center;padding-left:0px;font-weight:bold;-webkit-text-stroke:0;font-size:8.8px;"><span>6</span></div>
<div class="lbl" style="left:200.75px;top:233.45px;width:18.70px;height:11.10px;background:#c6c6c6;font-size:9.5px;border:1px solid #666666;overflow:hidden;justify-content:center;padding-left:0px;font-weight:bold;-webkit-text-stroke:0;font-size:8.8px;"><span>S</span></div>
<div class="lbl" style="left:222.75px;top:233.45px;width:19.20px;height:11.10px;background:#c6c6c6;font-size:9.5px;border:1px solid #666666;overflow:hidden;justify-content:center;padding-left:0px;"><span></span></div>
<svg style="left:227.40px;top:233.70px;width:10.00px;height:10.00px;" viewBox="0 0 10 10"><circle cx="5.200" cy="5.100" r="3" fill="#0c0c0c"/><path d="M5.900 3.300v3" stroke="#c8c8c8" stroke-width="0.800"/><circle cx="5.200" cy="6.400" r="0.900" fill="#c8c8c8"/></svg>
<svg style="left:246.60px;top:231.20px;width:9.00px;height:77.30px;" viewBox="0 0 9 77.30"><circle cx="4.200" cy="3.80" r="2.650" fill="#0c0c0c"/><circle cx="4.200" cy="10.96" r="2.650" fill="#0c0c0c"/><circle cx="4.200" cy="18.12" r="2.650" fill="#0c0c0c"/><circle cx="4.200" cy="25.28" r="2.650" fill="#0c0c0c"/><circle cx="4.200" cy="32.44" r="2.650" fill="#0c0c0c"/><circle cx="4.200" cy="39.60" r="2.650" fill="#0c0c0c"/><circle cx="4.200" cy="46.76" r="2.650" fill="#0c0c0c"/><circle cx="4.200" cy="53.92" r="2.650" fill="#0c0c0c"/><circle cx="4.200" cy="61.08" r="2.650" fill="#0c0c0c"/><circle cx="4.200" cy="68.24" r="2.650" fill="#0c0c0c"/></svg>
</div>
<div style="left:636.40px;top:437.50px;width:256.40px;height:38.50px;background:#878787;"></div>
<div style="left:636.40px;top:478.00px;width:83.80px;height:15.80px;background:#b87ccc;"></div>
<div style="left:721.70px;top:478.00px;width:66.10px;height:15.80px;background:#8e8e8e;"></div>
<div style="left:789.80px;top:478.00px;width:103.00px;height:15.80px;background:#8e8e8e;"></div>
<svg style="left:638.70px;top:479.40px;width:13.00px;height:13.00px;" viewBox="0 0 13 13"><circle cx="6.500" cy="6.500" r="5.300" fill="none" stroke="#40205a" stroke-width="1.100"/><path d="M4.800 3.700v5.600L9.200 6.500z" fill="#40205a"/></svg>
<div class="lbl" style="left:657.80px;top:479.10px;height:14px;font-size:9.0px;color:#40205a;justify-content:flex-start;font-weight:bold;-webkit-text-stroke:0;"><span>A Reverb</span></div>
<div class="lbl" style="left:723.55px;top:480.15px;width:62.50px;height:11.70px;background:#8d8d8d;font-size:9.5px;border:1px solid #666666;overflow:hidden;justify-content:center;padding-left:1.0px;"><span></span></div>
<div class="lbl" style="left:792.55px;top:480.15px;width:41.10px;height:11.70px;background:#feb40f;font-size:9.5px;border:1px solid #8a6a20;overflow:hidden;justify-content:center;padding-left:0px;font-weight:bold;"><span>A</span></div>
<div class="lbl" style="left:837.15px;top:480.15px;width:14.30px;height:11.70px;background:#c6c6c6;font-size:9.5px;border:1px solid #666666;overflow:hidden;justify-content:center;padding-left:0px;font-weight:bold;-webkit-text-stroke:0;font-size:8.8px;"><span>S</span></div>
<div class="lbl" style="left:855.55px;top:480.15px;width:22.80px;height:11.70px;background:#feb40f;font-size:9.5px;border:1px solid #8a6a20;overflow:hidden;justify-content:center;padding-left:0px;"><span>Post</span></div>
<div style="left:882.70px;top:478.00px;width:10.10px;height:15.80px;background:#999999;"></div>
<div style="left:883.90px;top:478.90px;width:2.30px;height:14.00px;background:#141414;"></div>
<div style="left:887.50px;top:478.90px;width:2.40px;height:14.00px;background:#141414;"></div>
<div style="left:883.50px;top:480.70px;width:6.80px;height:0.70px;background:#999999;"></div>
<div style="left:636.40px;top:495.80px;width:83.80px;height:15.00px;background:#e8509f;"></div>
<div style="left:721.70px;top:495.80px;width:66.10px;height:15.00px;background:#8e8e8e;"></div>
<div style="left:789.80px;top:495.80px;width:103.00px;height:15.00px;background:#8e8e8e;"></div>
<svg style="left:638.70px;top:496.80px;width:13.00px;height:13.00px;" viewBox="0 0 13 13"><circle cx="6.500" cy="6.500" r="5.300" fill="none" stroke="#5e0d3c" stroke-width="1.100"/><path d="M4.800 3.700v5.600L9.200 6.500z" fill="#5e0d3c"/></svg>
<div class="lbl" style="left:657.80px;top:496.50px;height:14px;font-size:9.0px;color:#5e0d3c;justify-content:flex-start;font-weight:bold;-webkit-text-stroke:0;"><span>B Delay</span></div>
<div class="lbl" style="left:723.55px;top:497.95px;width:62.50px;height:10.90px;background:#8d8d8d;font-size:9.5px;border:1px solid #666666;overflow:hidden;justify-content:center;padding-left:1.0px;"><span></span></div>
<div class="lbl" style="left:792.55px;top:497.95px;width:41.10px;height:10.90px;background:#feb40f;font-size:9.5px;border:1px solid #8a6a20;overflow:hidden;justify-content:center;padding-left:0px;font-weight:bold;"><span>B</span></div>
<div class="lbl" style="left:837.15px;top:497.95px;width:14.30px;height:10.90px;background:#c6c6c6;font-size:9.5px;border:1px solid #666666;overflow:hidden;justify-content:center;padding-left:0px;font-weight:bold;-webkit-text-stroke:0;font-size:8.8px;"><span>S</span></div>
<div class="lbl" style="left:855.55px;top:497.95px;width:22.80px;height:10.90px;background:#feb40f;font-size:9.5px;border:1px solid #8a6a20;overflow:hidden;justify-content:center;padding-left:0px;"><span>Post</span></div>
<div style="left:882.70px;top:495.80px;width:10.10px;height:15.00px;background:#999999;"></div>
<div style="left:883.90px;top:496.70px;width:2.30px;height:13.20px;background:#141414;"></div>
<div style="left:887.50px;top:496.70px;width:2.40px;height:13.20px;background:#141414;"></div>
<div style="left:883.50px;top:498.50px;width:6.80px;height:0.70px;background:#999999;"></div>
<div style="left:636.40px;top:512.60px;width:83.80px;height:15.10px;background:#ff94a8;"></div>
<div style="left:721.70px;top:512.60px;width:66.10px;height:15.10px;background:#8e8e8e;"></div>
<div style="left:789.80px;top:512.60px;width:103.00px;height:15.10px;background:#8e8e8e;"></div>
<svg style="left:638.70px;top:513.65px;width:13.00px;height:13.00px;" viewBox="0 0 13 13"><circle cx="6.500" cy="6.500" r="5.300" fill="none" stroke="#5c2633" stroke-width="1.100"/><path d="M4.800 3.700v5.600L9.200 6.500z" fill="#5c2633"/></svg>
<div class="lbl" style="left:659.80px;top:513.35px;height:14px;font-size:9.0px;color:#5c2633;justify-content:flex-start;font-weight:bold;-webkit-text-stroke:0;"><span>Master</span></div>
<div class="lbl" style="left:723.55px;top:514.75px;width:62.50px;height:11.00px;background:#e2e2e2;font-size:9.5px;border:1px solid #666666;overflow:hidden;justify-content:flex-start;padding-left:1.0px;border-color:#686868 #8a8a8a #a0a0a0 #686868;"><span>&nbsp;&nbsp;&nbsp;1/2</span></div>
<svg style="left:775.60px;top:515.80px;width:9.40px;height:8.90px;" viewBox="0 0 9.4 8.90"><rect x="0" y="0" width="9.400" height="12" fill="#e2e2e2"/><path d="M1.600 2.400h6.600l-3.300 4.700z" fill="#0a0a0a"/></svg>
<svg style="left:724.00px;top:515.20px;width:8.00px;height:10.10px;" viewBox="0 0 8 10"><g fill="#111"><rect x="2.3" y="4.2" width="1.3" height="4.6"/><rect x="4.7" y="4.2" width="1.3" height="4.6"/><circle cx="2.95" cy="2.7" r="0.8"/><circle cx="5.35" cy="2.7" r="0.8"/></g></svg>
<div class="lbl" style="left:792.55px;top:514.75px;width:41.10px;height:11.00px;background:#dcdcdc;font-size:9.5px;border:1px solid #666666;overflow:hidden;justify-content:center;padding-left:0px;background:linear-gradient(90deg,#5fd8f0 0,#5fd8f0 83%,#dcdcdc 83%);"><span>0</span></div>
<div class="lbl" style="left:837.15px;top:514.75px;width:41.20px;height:11.00px;background:#dcdcdc;font-size:9.5px;border:1px solid #666666;overflow:hidden;justify-content:center;padding-left:0px;background:linear-gradient(90deg,#3d74f0 0,#3d74f0 83%,#dcdcdc 83%);"><span>0</span></div>
<div style="left:882.70px;top:512.60px;width:10.10px;height:15.10px;background:#999999;"></div>
<div style="left:883.90px;top:513.50px;width:2.30px;height:13.30px;background:#141414;"></div>
<div style="left:887.50px;top:513.50px;width:2.40px;height:13.30px;background:#141414;"></div>
<div style="left:883.50px;top:515.30px;width:6.80px;height:0.70px;background:#999999;"></div>
<div style="left:898.90px;top:456.70px;width:12.20px;height:12.20px;background:#feb40f;border-radius:50%;"></div>
<div class="lbl" style="left:897.00px;top:458.80px;height:8px;font-size:5.8px;color:#946800;width:16.00px;justify-content:center;-webkit-text-stroke:0.3px;"><span>I-O</span></div>
<div style="left:898.90px;top:473.60px;width:12.20px;height:12.20px;background:#feb40f;border-radius:50%;"></div>
<div class="lbl" style="left:897.00px;top:475.70px;height:8px;font-size:5.8px;color:#946800;width:16.00px;justify-content:center;-webkit-text-stroke:0.3px;"><span>R</span></div>
<div style="left:898.90px;top:490.40px;width:12.20px;height:12.20px;background:#feb40f;border-radius:50%;"></div>
<div class="lbl" style="left:897.00px;top:492.50px;height:8px;font-size:5.8px;color:#946800;width:16.00px;justify-content:center;-webkit-text-stroke:0.3px;"><span>M</span></div>
<div style="left:898.90px;top:507.40px;width:12.20px;height:12.20px;background:#0c0c0c;border-radius:50%;"></div>
<div class="lbl" style="left:897.00px;top:509.50px;height:8px;font-size:5.8px;color:#5a5a5a;width:16.00px;justify-content:center;-webkit-text-stroke:0.3px;"><span>D</span></div>
<div style="left:901.80px;top:205.80px;width:6.20px;height:240.70px;background:#707070;border-radius:3.1px;"></div>
<div style="left:30.50px;top:549.20px;width:626.50px;height:21.20px;background:#505050;border-radius:4px;"></div>
<div style="left:32.60px;top:551.20px;width:622.40px;height:17.20px;background:#8f8f8f;border-radius:1.5px;"></div>
<div style="left:662.00px;top:549.20px;width:185.00px;height:21.20px;background:#505050;border-radius:4px;"></div>
<div style="left:664.00px;top:551.20px;width:181.00px;height:17.20px;background:#8f8f8f;border-radius:1.5px;"></div>
<div style="left:854.30px;top:550.00px;width:38.10px;height:19.00px;background:#5c5c5c;border-radius:3px;"></div>
<div class="lbl" style="left:854.30px;top:552.60px;height:14px;font-size:9.3px;color:#111;width:38.10px;justify-content:center;font-weight:bold;-webkit-text-stroke:0;"><span>5-MIDI</span></div>
<div style="left:899.60px;top:550.80px;width:17.20px;height:17.20px;background:#5a5a5a;border-radius:50%;"></div>
<svg style="left:899.70px;top:550.90px;width:17.00px;height:17.00px;" viewBox="0 0 17.00 17.00"><path d="M11.8 3.4L3.4 8.3l8.4 4.9z" fill="#9c9c9c" stroke="#9c9c9c" stroke-width="1" stroke-linejoin="round"/></svg>
<div class="lbl" style="left:40.20px;top:552.80px;height:14px;font-size:9.5px;color:#111;justify-content:flex-start;"><span><span class="k">所选时长</span></span></div>
<div class="lbl" style="left:86.80px;top:552.80px;height:14px;font-size:9.5px;color:#111;justify-content:flex-start;"><span><span class="k">开始：</span></span></div>
<div class="lbl" style="left:115.50px;top:552.80px;height:14px;font-size:9.5px;color:#111;justify-content:flex-start;font-weight:bold;-webkit-text-stroke:0;font-size:9.2px;"><span>9.1.1</span></div>
<div class="lbl" style="left:147.10px;top:552.80px;height:14px;font-size:9.5px;color:#111;justify-content:flex-start;"><span><span class="k">结束点：</span></span></div>
<div class="lbl" style="left:184.80px;top:552.80px;height:14px;font-size:9.5px;color:#111;justify-content:flex-start;font-weight:bold;-webkit-text-stroke:0;font-size:9.2px;"><span>35.1.1</span></div>
<div class="lbl" style="left:222.10px;top:552.80px;height:14px;font-size:9.5px;color:#111;justify-content:flex-start;"><span><span class="k">长度：</span></span></div>
<div class="lbl" style="left:250.80px;top:552.80px;height:14px;font-size:9.5px;color:#111;justify-content:flex-start;font-weight:bold;-webkit-text-stroke:0;font-size:9.2px;"><span>26.0.0</span></div>
<div class="lbl" style="left:280.60px;top:552.80px;height:14px;font-size:9.5px;color:#111;justify-content:flex-start;font-weight:bold;-webkit-text-stroke:0;font-size:9.2px;"><span>(<span class="k">持续时间：</span></span></div>
<div class="lbl" style="left:332.00px;top:552.80px;height:14px;font-size:9.5px;color:#111;justify-content:flex-start;font-weight:bold;-webkit-text-stroke:0;font-size:9.2px;"><span>0:52)</span></div>
<div style="left:0.00px;top:1.00px;width:1.00px;height:24.00px;background:#565253;"></div>
<div style="left:0.00px;top:26.00px;width:1.00px;height:551.00px;background:#7f7f7f;"></div>
</div></body></html>
